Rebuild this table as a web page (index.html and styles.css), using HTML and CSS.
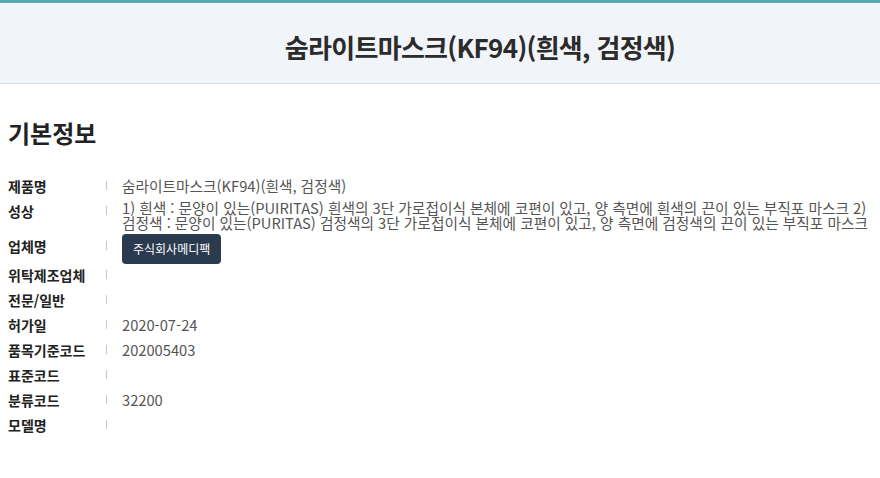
FILE: index.html
```html
<!DOCTYPE html>
<html lang="ko">
<head>
<meta charset="utf-8">
<title>숨라이트마스크(KF94)(흰색, 검정색)</title>
<link rel="stylesheet" href="styles.css">
</head>
<body>
<header class="top">
  <h1 class="title">숨라이트마스크(KF94)(흰색, 검정색)</h1>
</header>
<main class="content">
  <h2 class="section-title">기본정보</h2>
  <div class="info">
    <div class="row">
      <div class="label">제품명</div>
      <div class="sep"></div>
      <div class="value">숨라이트마스크(KF94)(흰색, 검정색)</div>
    </div>
    <div class="row row-multi">
      <div class="label">성상</div>
      <div class="sep"></div>
      <div class="value">1) 흰색 : 문양이 있는(PUIRITAS) 흰색의 3단 가로접이식 본체에 코편이 있고, 양 측면에 흰색의 끈이 있는 부직포 마스크 2) 검정색 : 문양이 있는(PURITAS) 검정색의 3단 가로접이식 본체에 코편이 있고, 양 측면에 검정색의 끈이 있는 부직포 마스크</div>
    </div>
    <div class="row row-button">
      <div class="label">업체명</div>
      <div class="sep"></div>
      <div class="value"><span class="company">주식회사메디팩</span></div>
    </div>
    <div class="row">
      <div class="label">위탁제조업체</div>
      <div class="sep"></div>
      <div class="value"></div>
    </div>
    <div class="row">
      <div class="label">전문/일반</div>
      <div class="sep"></div>
      <div class="value"></div>
    </div>
    <div class="row">
      <div class="label">허가일</div>
      <div class="sep"></div>
      <div class="value">2020-07-24</div>
    </div>
    <div class="row">
      <div class="label">품목기준코드</div>
      <div class="sep"></div>
      <div class="value">202005403</div>
    </div>
    <div class="row">
      <div class="label">표준코드</div>
      <div class="sep"></div>
      <div class="value"></div>
    </div>
    <div class="row">
      <div class="label">분류코드</div>
      <div class="sep"></div>
      <div class="value">32200</div>
    </div>
    <div class="row">
      <div class="label">모델명</div>
      <div class="sep"></div>
      <div class="value"></div>
    </div>
  </div>
</main>
</body>
</html>
```

FILE: styles.css
```css
html, body {
  margin: 0;
  padding: 0;
  background: #ffffff;
}

body {
  font-family: "Noto Sans CJK KR", "Noto Sans", sans-serif;
  color: #222222;
}

.top {
  border-top: 3px solid #55a9b7;
  border-bottom: 1px solid #d6d9dd;
  background: #f1f5fa;
  padding: 26px 0 18px 80px;
}

.title {
  margin: 0;
  text-align: center;
  font-size: 26px;
  line-height: 36px;
  font-weight: 700;
  letter-spacing: -0.7px;
  color: #2b2b2b;
}

.content {
  padding: 0 0 0 8px;
}

.section-title {
  margin: 34px 0 0;
  font-size: 24px;
  line-height: 30px;
  font-weight: 700;
  color: #222222;
}

.info {
  margin-top: 26px;
}

.row {
  display: flex;
  align-items: flex-start;
}

.label {
  width: 98px;
  flex: none;
  font-size: 14px;
  line-height: 25px;
  font-weight: 700;
  color: #222222;
}

.sep {
  flex: none;
  width: 1px;
  height: 9px;
  margin-top: 7px;
  margin-right: 15px;
  background: #c8c8c8;
}

.value {
  flex: 1;
  min-height: 25px;
  font-size: 14.7px;
  line-height: 24px;
  color: #555555;
  word-break: keep-all;
}

.row-multi .value {
  line-height: 15px;
  padding-top: 1px;
  padding-bottom: 4px;
}

.row-button .value {
  min-height: 0;
  line-height: 0;
}

.company {
  display: inline-block;
  height: 30px;
  margin-bottom: -1px;
  padding: 0 11px;
  border-radius: 4px;
  background: #2a3a4f;
  color: #ffffff;
  font-size: 12px;
  line-height: 30px;
}
```
